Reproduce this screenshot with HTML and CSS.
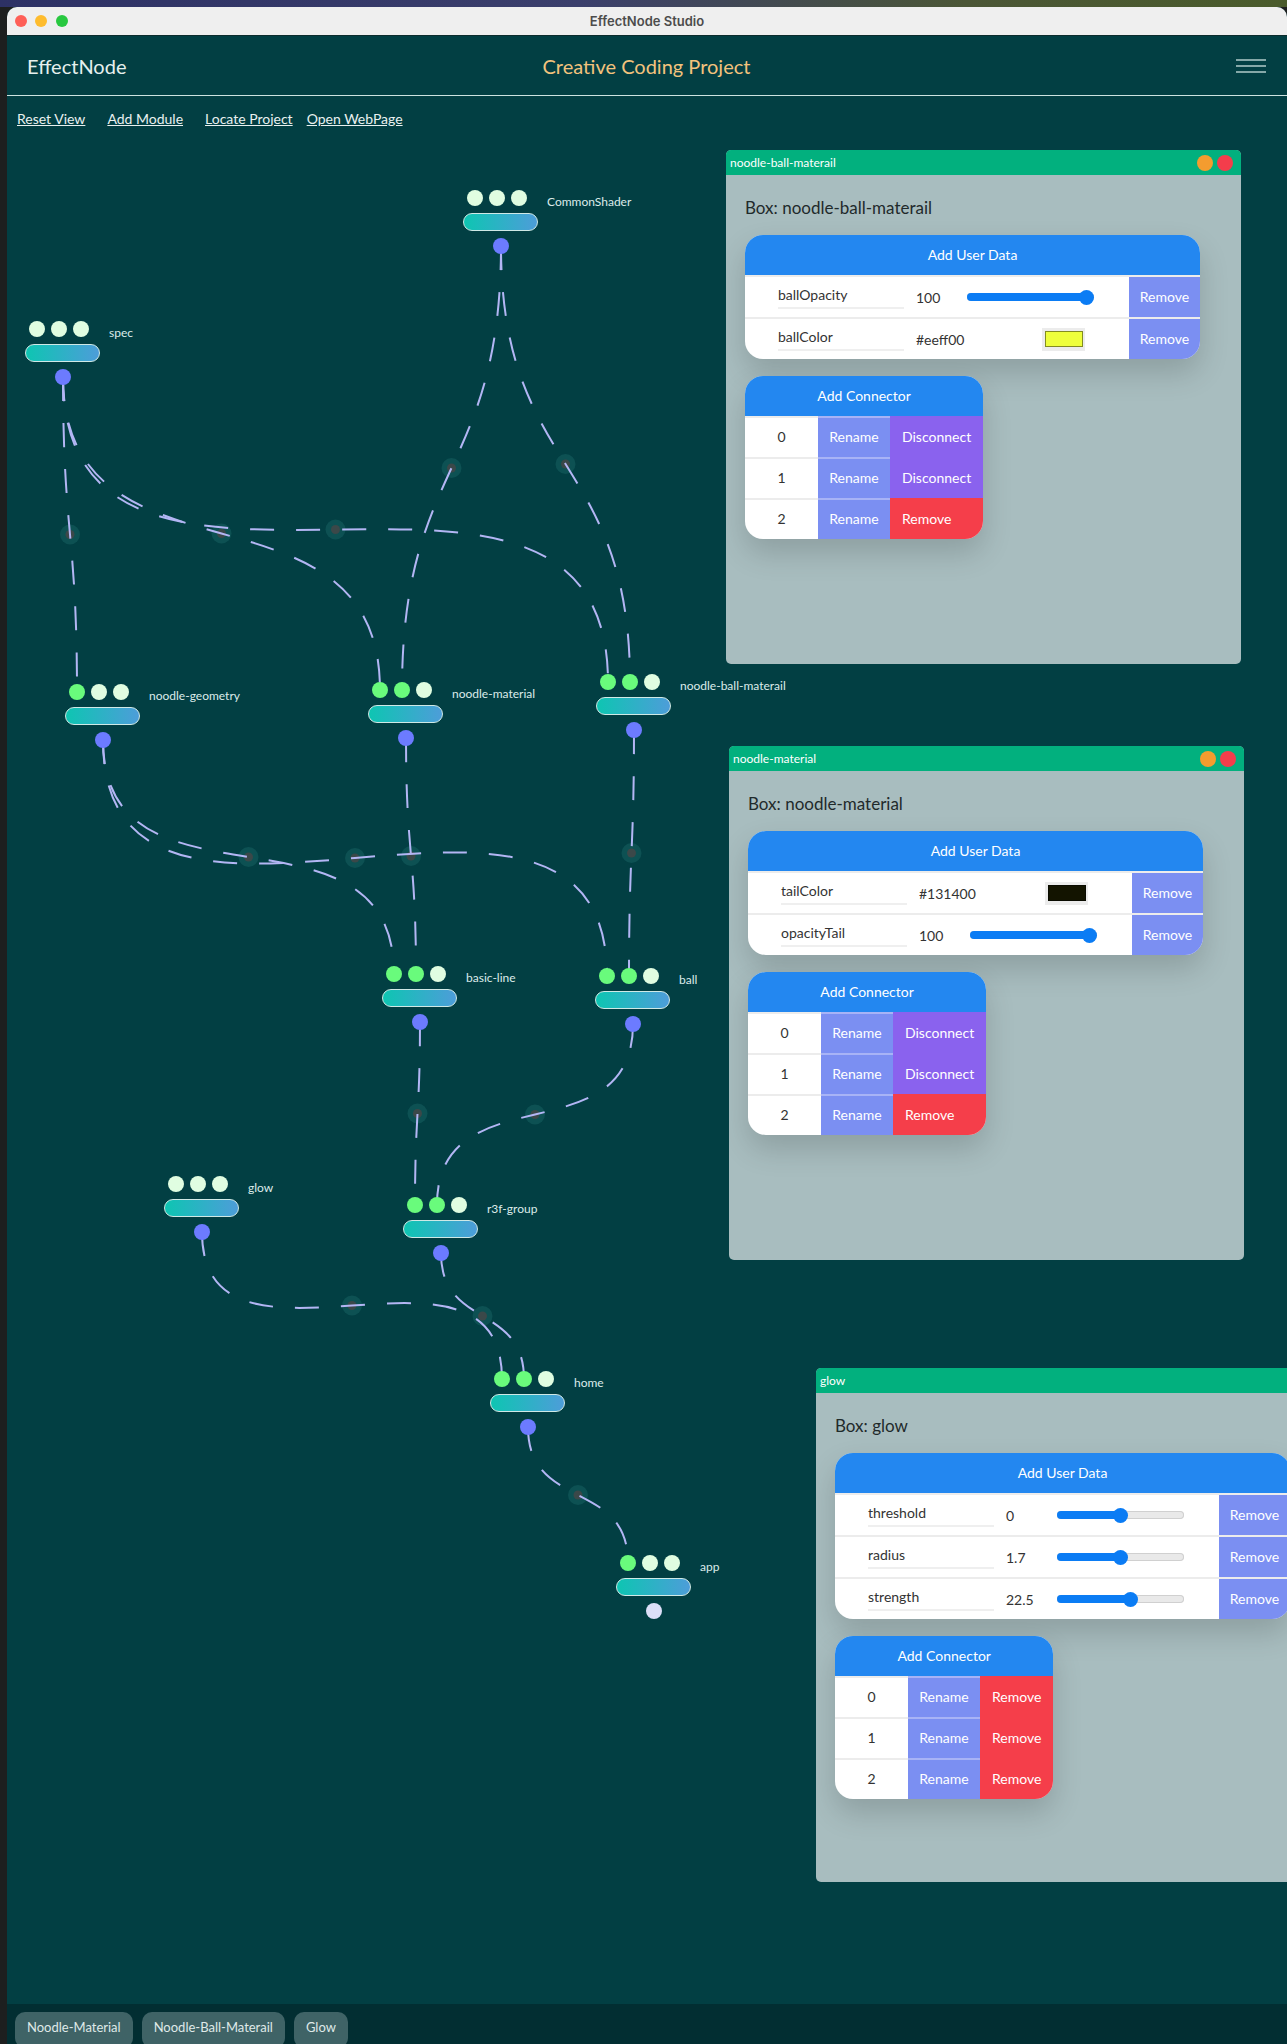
FILE: index.html
```html
<!DOCTYPE html>
<html lang="en">
<head>
    <meta charset="UTF-8">
    <meta name="viewport" content="width=device-width, initial-scale=1.0">
    <title>EffectNode Studio</title>
    <link rel="stylesheet" href="styles.css">
</head>
<body>
    <div class="desktop-bar"></div>
    <div class="window">
        <div class="titlebar">
            <div class="lights">
                <span class="light close"></span>
                <span class="light min"></span>
                <span class="light max"></span>
            </div>
            <div class="window-title">EffectNode Studio</div>
        </div>

        <header class="topbar">
            <div class="brand">EffectNode</div>
            <div class="project">Creative Coding Project</div>
            <div class="burger"><span></span><span></span><span></span></div>
        </header>

        <nav class="toolbar">
            <a href="#" class="reset">Reset View</a>
            <a href="#" class="add">Add Module</a>
            <a href="#" class="locate">Locate Project</a>
            <a href="#">Open WebPage</a>
        </nav>

        <main class="canvas" id="canvas">
            <svg id="wires" class="wires" width="1280" height="1868"></svg>
            <div id="nodes"></div>

            <section class="panel panel-ballmat">
                <div class="panel-bar">
                    <span class="panel-name">noodle-ball-materail</span>
                    <span class="dot orange"></span><span class="dot red"></span>
                </div>
                <div class="panel-body">
                    <h3 class="box-title">Box: noodle-ball-materail</h3>
                    <div class="card userdata">
                        <div class="card-head">Add User Data</div>
                        <div class="ud-row">
                            <span class="ud-name">ballOpacity</span>
                            <span class="ud-val">100</span>
                            <div class="slider" style="--v: 1"><span class="fill"></span><span class="knob"></span></div>
                            <span class="ud-del">Remove</span>
                        </div>
                        <div class="ud-row">
                            <span class="ud-name">ballColor</span>
                            <span class="ud-val">#eeff00</span>
                            <span class="swatch"><span class="chip" style="background: #eeff3c"></span></span>
                            <span class="ud-del">Remove</span>
                        </div>
                    </div>
                    <div class="card conn">
                        <div class="card-head">Add Connector</div>
                        <div class="conn-grid">
                            <span class="c-idx">0</span><span class="c-ren">Rename</span><span class="c-act purple">Disconnect</span>
                            <span class="c-idx">1</span><span class="c-ren">Rename</span><span class="c-act purple">Disconnect</span>
                            <span class="c-idx">2</span><span class="c-ren">Rename</span><span class="c-act red">Remove</span>
                        </div>
                    </div>
                </div>
            </section>

            <section class="panel panel-mat">
                <div class="panel-bar">
                    <span class="panel-name">noodle-material</span>
                    <span class="dot orange"></span><span class="dot red"></span>
                </div>
                <div class="panel-body">
                    <h3 class="box-title">Box: noodle-material</h3>
                    <div class="card userdata">
                        <div class="card-head">Add User Data</div>
                        <div class="ud-row">
                            <span class="ud-name">tailColor</span>
                            <span class="ud-val">#131400</span>
                            <span class="swatch"><span class="chip" style="background: #131400"></span></span>
                            <span class="ud-del">Remove</span>
                        </div>
                        <div class="ud-row">
                            <span class="ud-name">opacityTail</span>
                            <span class="ud-val">100</span>
                            <div class="slider" style="--v: 1"><span class="fill"></span><span class="knob"></span></div>
                            <span class="ud-del">Remove</span>
                        </div>
                    </div>
                    <div class="card conn">
                        <div class="card-head">Add Connector</div>
                        <div class="conn-grid">
                            <span class="c-idx">0</span><span class="c-ren">Rename</span><span class="c-act purple">Disconnect</span>
                            <span class="c-idx">1</span><span class="c-ren">Rename</span><span class="c-act purple">Disconnect</span>
                            <span class="c-idx">2</span><span class="c-ren">Rename</span><span class="c-act red">Remove</span>
                        </div>
                    </div>
                </div>
            </section>

            <section class="panel panel-glow">
                <div class="panel-bar">
                    <span class="panel-name">glow</span>
                    <span class="dot orange"></span><span class="dot red"></span>
                </div>
                <div class="panel-body">
                    <h3 class="box-title">Box: glow</h3>
                    <div class="card userdata">
                        <div class="card-head">Add User Data</div>
                        <div class="ud-row">
                            <span class="ud-name">threshold</span>
                            <span class="ud-val">0</span>
                            <div class="slider" style="--v: 0.5"><span class="fill"></span><span class="knob"></span></div>
                            <span class="ud-del">Remove</span>
                        </div>
                        <div class="ud-row">
                            <span class="ud-name">radius</span>
                            <span class="ud-val">1.7</span>
                            <div class="slider" style="--v: 0.5"><span class="fill"></span><span class="knob"></span></div>
                            <span class="ud-del">Remove</span>
                        </div>
                        <div class="ud-row">
                            <span class="ud-name">strength</span>
                            <span class="ud-val">22.5</span>
                            <div class="slider" style="--v: 0.59"><span class="fill"></span><span class="knob"></span></div>
                            <span class="ud-del">Remove</span>
                        </div>
                    </div>
                    <div class="card conn">
                        <div class="card-head">Add Connector</div>
                        <div class="conn-grid">
                            <span class="c-idx">0</span><span class="c-ren">Rename</span><span class="c-act red">Remove</span>
                            <span class="c-idx">1</span><span class="c-ren">Rename</span><span class="c-act red">Remove</span>
                            <span class="c-idx">2</span><span class="c-ren">Rename</span><span class="c-act red">Remove</span>
                        </div>
                    </div>
                </div>
            </section>
        </main>

        <footer class="dock">
            <span class="tab">Noodle-Material</span>
            <span class="tab">Noodle-Ball-Materail</span>
            <span class="tab">Glow</span>
        </footer>
    </div>

    <script>
const OX = 7
const OY = 136
const wires = document.getElementById('wires')
const nodeLayer = document.getElementById('nodes')
const NS = 'http://www.w3.org/2000/svg'

// bar position (top left) of each box, page coords
const boxes = {
    'CommonShader': { x: 463, y: 213, ins: [0, 0, 0] },
    'spec': { x: 25, y: 344, ins: [0, 0, 0] },
    'noodle-geometry': { x: 65, y: 707, ins: [1, 0, 0] },
    'noodle-material': { x: 368, y: 705, ins: [1, 1, 0] },
    'noodle-ball-materail': { x: 596, y: 697, ins: [1, 1, 0] },
    'basic-line': { x: 382, y: 989, ins: [1, 1, 0] },
    'ball': { x: 595, y: 991, ins: [1, 1, 0] },
    'glow': { x: 164, y: 1199, ins: [0, 0, 0] },
    'r3f-group': { x: 403, y: 1220, ins: [1, 1, 0] },
    'home': { x: 490, y: 1394, ins: [1, 1, 0] },
    'app': { x: 616, y: 1578, ins: [1, 0, 0], last: true }
}

const links = [
    ['spec', 'noodle-geometry', 0],
    ['spec', 'noodle-material', 0],
    ['spec', 'noodle-ball-materail', 0],
    ['CommonShader', 'noodle-material', 1],
    ['CommonShader', 'noodle-ball-materail', 1],
    ['noodle-geometry', 'basic-line', 0],
    ['noodle-geometry', 'ball', 0],
    ['noodle-material', 'basic-line', 1],
    ['noodle-ball-materail', 'ball', 1],
    ['basic-line', 'r3f-group', 0],
    ['ball', 'r3f-group', 1],
    ['glow', 'home', 0],
    ['r3f-group', 'home', 1],
    ['home', 'app', 0]
]

function outPoint(b) {
    return [b.x - OX + 38, b.y - OY + 33]
}
function inPoint(b, i) {
    return [b.x - OX + 12 + 22 * i, b.y - OY - 15]
}

Object.keys(boxes).forEach(name => {
    const b = boxes[name]
    const node = document.createElement('div')
    node.className = 'node'
    node.style.left = (b.x - OX) + 'px'
    node.style.top = (b.y - OY - 23) + 'px'
    const ports = b.ins.map(on => '<span class="port' + (on ? ' on' : '') + '"></span>').join('')
    node.innerHTML =
        '<div class="node-head"><div class="ports">' + ports + '</div>' +
        '<span class="node-name">' + name + '</span></div>' +
        '<div class="node-bar"></div>' +
        '<span class="node-out' + (b.last ? ' idle' : '') + '"></span>'
    nodeLayer.appendChild(node)
})

// joints first so the dashes sit on top of them
links.forEach(([from, to, slot]) => {
    const [x1, y1] = outPoint(boxes[from])
    const [x2, y2] = inPoint(boxes[to], slot)
    const halo = document.createElementNS(NS, 'circle')
    halo.setAttribute('cx', (x1 + x2) / 2)
    halo.setAttribute('cy', (y1 + y2) / 2)
    halo.setAttribute('r', 10)
    halo.setAttribute('class', 'joint-halo')
    const core = document.createElementNS(NS, 'circle')
    core.setAttribute('cx', (x1 + x2) / 2)
    core.setAttribute('cy', (y1 + y2) / 2)
    core.setAttribute('r', 4.5)
    core.setAttribute('class', 'joint')
    wires.appendChild(halo)
    wires.appendChild(core)
})

links.forEach(([from, to, slot]) => {
    const [x1, y1] = outPoint(boxes[from])
    const [x2, y2] = inPoint(boxes[to], slot)
    const k = Math.hypot(x2 - x1, y2 - y1) / 2
    const path = document.createElementNS(NS, 'path')
    path.setAttribute('d', 'M ' + x1 + ' ' + y1 + ' C ' + x1 + ' ' + (y1 + k) + ', ' + x2 + ' ' + (y2 - k) + ', ' + x2 + ' ' + y2)
    path.setAttribute('class', 'wire')
    wires.appendChild(path)
})
    </script>
</body>
</html>
```

FILE: styles.css
```css
* {
    margin: 0;
    padding: 0;
    box-sizing: border-box;
}

body {
    width: 1287px;
    height: 2044px;
    overflow: hidden;
    background: #1d1f1f;
    font-family: 'Lato', 'Open Sans', sans-serif;
}

.desktop-bar {
    height: 7px;
    background: linear-gradient(90deg, #2d3165, #3b3f6c 45%, #4b5636 75%, #4a5b2b);
}

.window {
    margin-left: 7px;
    height: 2037px;
    display: flex;
    flex-direction: column;
    background: #023f43;
    border-radius: 10px 10px 0 0;
    overflow: hidden;
}

/* mac title bar */
.titlebar {
    flex: none;
    height: 29px;
    background: #efefef;
    border-bottom: 1px solid #0c2c2d;
    display: grid;
    grid-template-columns: 1fr auto 1fr;
    align-items: center;
}
.lights {
    display: flex;
    gap: 8.5px;
    padding-left: 7.5px;
}
.light {
    width: 12px;
    height: 12px;
    border-radius: 50%;
}
.close { background: #fe5f57; }
.min { background: #febc2e; }
.max { background: #28c840; }
.window-title {
    font-family: 'Inter', 'Lato', sans-serif;
    font-size: 13px;
    font-weight: 600;
    color: #4c4c4c;
}

/* app header */
.topbar {
    flex: none;
    height: 60px;
    display: grid;
    grid-template-columns: 1fr auto 1fr;
    align-items: center;
    padding: 0 21px 0 20px;
    border-bottom: 1px solid #cde3e0;
}
.brand {
    font-size: 20px;
    color: #e6f0ee;
}
.project {
    font-size: 20px;
    color: #f3c37d;
}
.burger {
    justify-self: end;
    width: 30px;
    display: flex;
    flex-direction: column;
    gap: 4px;
}
.burger span {
    height: 2px;
    background: #85a8a8;
}

.toolbar {
    flex: none;
    height: 40px;
    display: flex;
    align-items: center;
    padding: 4px 10px 0;
}
.toolbar a {
    color: #e9f1f0;
    font-size: 14px;
    text-decoration: underline;
}
.toolbar .reset { margin-right: 22px; }
.toolbar .add { margin-right: 22px; }
.toolbar .locate { margin-right: 14px; }

/* node canvas */
.canvas {
    flex: 1;
    position: relative;
    overflow: hidden;
}
.wires {
    position: absolute;
    left: 0;
    top: 0;
}
.wire {
    fill: none;
    stroke: #b3b6f4;
    stroke-width: 2;
    stroke-dasharray: 24 22;
}
.joint-halo {
    fill: #0d5153;
}
.joint {
    fill: #3b4849;
}

.node {
    position: absolute;
    width: 75px;
}
.node-head {
    display: flex;
    align-items: center;
    height: 16px;
}
.ports {
    display: flex;
    gap: 6px;
    margin-left: 4px;
}
.port {
    width: 16px;
    height: 16px;
    border-radius: 50%;
    background: #e0fde1;
}
.port.on {
    background: #69fb7c;
}
.node-name {
    margin: 8px 0 0 20px;
    font-size: 12px;
    line-height: 16px;
    color: #dcebea;
    white-space: nowrap;
}
.node-bar {
    margin-top: 7px;
    height: 18px;
    border-radius: 9px;
    border: 1px solid #cfe9e6;
    background: linear-gradient(90deg, #0ec5b2, #4d9dd9);
}
.node-out {
    display: block;
    width: 16px;
    height: 16px;
    margin: 7px 0 0 30px;
    border-radius: 50%;
    background: #6c7bff;
}
.node-out.idle {
    background: #dcdff8;
}

/* floating box windows */
.panel {
    position: absolute;
    width: 515px;
    height: 514px;
    background: #a8bdbf;
    border-radius: 5px;
    overflow: hidden;
}
.panel-ballmat { left: 719px; top: 14px; }
.panel-mat { left: 722px; top: 610px; }
.panel-glow { left: 809px; top: 1232px; }

.panel-bar {
    height: 25px;
    background: #02b07e;
    display: flex;
    align-items: center;
    padding: 0 8px 0 4px;
}
.panel-name {
    flex: 1;
    color: #fff;
    font-size: 12px;
}
.dot {
    width: 16px;
    height: 16px;
    border-radius: 50%;
    margin-left: 4px;
}
.dot.orange { background: #f49c2f; }
.dot.red { background: #f43d4b; }

.panel-body {
    padding: 22px 20px 0 19px;
}
.box-title {
    font-size: 17px;
    font-weight: 400;
    line-height: 22px;
    color: #1f2a2b;
    margin-bottom: 16px;
}

.card {
    background: #fff;
    border-radius: 18px;
    overflow: hidden;
    box-shadow: 0 14px 30px rgba(0, 0, 0, 0.16);
    margin-bottom: 17px;
}
.userdata {
    width: 455px;
}
.conn {
    width: max-content;
}
.card-head {
    height: 40px;
    line-height: 40px;
    text-align: center;
    background: #2387f0;
    color: #fff;
    font-size: 14px;
}

.ud-row {
    display: flex;
    align-items: center;
    height: 42px;
    border-top: 2px solid #ececec;
    font-size: 14px;
    color: #333;
}
.ud-name {
    margin-left: 33px;
    width: 126px;
    line-height: 20px;
    padding-bottom: 2px;
    border-bottom: 2px solid #efefef;
}
.ud-val {
    margin-left: 12px;
    width: 51px;
}
.ud-del {
    margin-left: auto;
    width: 71px;
    align-self: stretch;
    display: flex;
    align-items: center;
    justify-content: center;
    padding-bottom: 2px;
    background: #7b8ff2;
    color: #fff;
}

.slider {
    position: relative;
    width: 127px;
    height: 8px;
    border-radius: 4px;
    background: #e9e9e9;
    box-shadow: inset 0 0 0 1px #d0d0d0;
}
.slider .fill {
    position: absolute;
    left: 0;
    top: 0;
    bottom: 0;
    width: calc(7.5px + var(--v) * 112px);
    border-radius: 4px;
    background: #0b7cf4;
}
.slider .knob {
    position: absolute;
    top: -3.5px;
    left: calc(var(--v) * 112px);
    width: 15px;
    height: 15px;
    border-radius: 50%;
    background: #0b7cf4;
}

.swatch {
    margin-left: 75px;
    width: 43px;
    height: 23px;
    background: #ececec;
    display: flex;
    align-items: center;
    justify-content: center;
}
.chip {
    width: 38px;
    height: 16px;
    border: 1px solid rgba(0, 0, 0, 0.45);
}

.conn-grid {
    display: grid;
    grid-template-columns: 73px 72px auto;
    font-size: 14px;
}
.conn-grid span {
    height: 41px;
    line-height: 37px;
    border-top: 2px solid #ececec;
}
.c-idx {
    text-align: center;
    color: #333;
}
.c-ren {
    text-align: center;
    color: #fff;
    background: #7b8ff2;
    border-top-color: #a7b3f6 !important;
}
.c-act {
    padding: 0 12px;
    color: #fff;
    border-top-color: transparent !important;
}
.c-act.purple { background: #8a62ee; }
.c-act.red { background: #f53e4a; }

/* open box tabs */
.dock {
    flex: none;
    height: 40px;
    background: #022e32;
    display: flex;
    gap: 9px;
    padding: 8px 0 0 8px;
    overflow: hidden;
}
.tab {
    height: 36px;
    padding: 6px 12px 0;
    line-height: 18px;
    font-size: 13px;
    color: #dfe9e8;
    background: #3f6366;
    border-radius: 10px;
}
```
